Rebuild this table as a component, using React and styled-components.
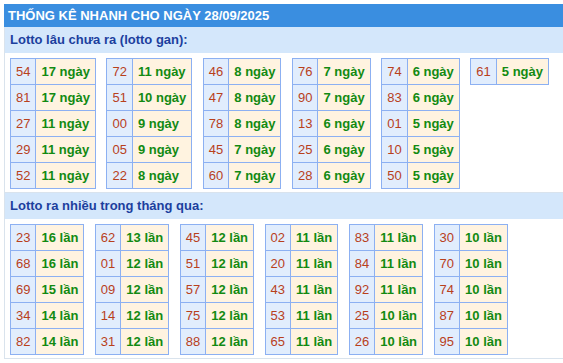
import React from "react";
import styled, { createGlobalStyle } from "styled-components";

const GlobalStyle = createGlobalStyle`
  body {
    margin: 0;
    overflow: hidden;
    background: #fff;
    font-family: "Liberation Sans", Arial, sans-serif;
  }
`;

const Wrapper = styled.div`
  margin: 4px 0 0 4px;
  width: calc(100% - 4px);
  box-sizing: border-box;
`;

const TitleBar = styled.div`
  height: 23px;
  line-height: 24px;
  padding-left: 4px;
  background-color: #3a8ee0;
  color: #fff;
  font-size: 13px;
  font-weight: 700;
`;

const Section = styled.div`
  border: 1px solid #d9e3ed;
  border-top: none;
  border-right: none;
`;

const SectionHeader = styled.div`
  height: 26px;
  line-height: 26px;
  padding-left: 5px;
  background-color: #d4e7fb;
  color: #1c3f9e;
  font-size: 13px;
  font-weight: 700;
`;

const TableRow = styled.div`
  display: flex;
  align-items: flex-start;
  gap: 10.5px;
  padding: 5px 5px 3px 5px;
`;

const Table = styled.table`
  border-collapse: collapse;
  font-size: 13px;
`;

const NumCell = styled.td`
  height: 25px;
  padding: 0 5px;
  border: 1px solid #8cb0f2;
  background-color: #e1edfd;
  color: #b8401c;
  text-align: center;
`;

const ValueCell = styled.td`
  height: 25px;
  padding: 0 5px;
  border: 1px solid #8cb0f2;
  background-color: #fff3e0;
  color: #128a12;
  font-weight: 700;
  white-space: nowrap;
`;

const ganTables = [
  [["54", 17], ["81", 17], ["27", 11], ["29", 11], ["52", 11]],
  [["72", 11], ["51", 10], ["00", 9], ["05", 9], ["22", 8]],
  [["46", 8], ["47", 8], ["78", 8], ["45", 7], ["60", 7]],
  [["76", 7], ["90", 7], ["13", 6], ["25", 6], ["28", 6]],
  [["74", 6], ["83", 6], ["01", 5], ["10", 5], ["50", 5]],
  [["61", 5]],
];

const hotTables = [
  [["23", 16], ["68", 16], ["69", 15], ["34", 14], ["82", 14]],
  [["62", 13], ["01", 12], ["09", 12], ["14", 12], ["31", 12]],
  [["45", 12], ["51", 12], ["57", 12], ["75", 12], ["88", 12]],
  [["02", 11], ["20", 11], ["43", 11], ["53", 11], ["65", 11]],
  [["83", 11], ["84", 11], ["92", 11], ["25", 10], ["26", 10]],
  [["30", 10], ["70", 10], ["74", 10], ["87", 10], ["95", 10]],
];

const StatTable = ({ rows, unit }) => (
  <Table>
    <tbody>
      {rows.map(([num, count]) => (
        <tr key={num}>
          <NumCell>{num}</NumCell>
          <ValueCell>
            {count} {unit}
          </ValueCell>
        </tr>
      ))}
    </tbody>
  </Table>
);

const StatSection = ({ title, tables, unit }) => (
  <Section>
    <SectionHeader>{title}</SectionHeader>
    <TableRow>
      {tables.map((rows, i) => (
        <StatTable key={i} rows={rows} unit={unit} />
      ))}
    </TableRow>
  </Section>
);

const App = () => {
  return (
    <>
      <GlobalStyle />
      <Wrapper>
        <TitleBar>THỐNG KÊ NHANH CHO NGÀY 28/09/2025</TitleBar>
        <StatSection
          title="Lotto lâu chưa ra (lotto gan):"
          tables={ganTables}
          unit="ngày"
        />
        <StatSection
          title="Lotto ra nhiều trong tháng qua:"
          tables={hotTables}
          unit="lần"
        />
      </Wrapper>
    </>
  );
};

export default App;
